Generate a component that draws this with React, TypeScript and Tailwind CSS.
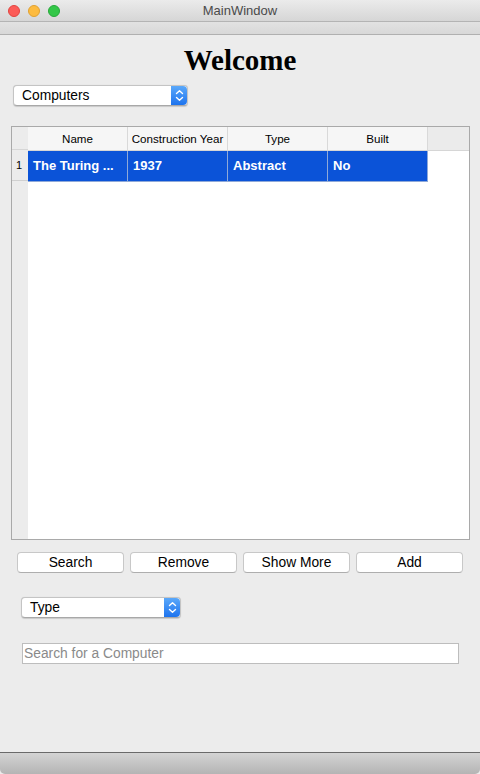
import React from "react";

const sans = { fontFamily: '"Liberation Sans", Arial, sans-serif' };

function Stepper() {
  return (
    <div className="w-[16px] self-stretch rounded-r-[4px] bg-gradient-to-b from-[#5aa8fa] to-[#1c73ee] flex items-center justify-center">
      <svg width="9" height="13" viewBox="0 0 9 13" fill="none" stroke="white" strokeWidth="1.4" strokeLinecap="round" strokeLinejoin="round">
        <path d="M1.5 4.5 L4.5 1.8 L7.5 4.5" />
        <path d="M1.5 8.5 L4.5 11.2 L7.5 8.5" />
      </svg>
    </div>
  );
}

function Combo({ label, className }: { label: string; className: string }) {
  return (
    <div className={`flex items-stretch h-[21px] bg-white rounded-[4px] border border-[#c4c4c4] border-b-[#a8a8a8] shadow-[0_0.5px_1px_rgba(0,0,0,0.15)] ${className}`}>
      <div className="flex-1 pl-[8px] text-[13.8px] leading-[19px] text-black">{label}</div>
      <Stepper />
    </div>
  );
}

function Btn({ label }: { label: string }) {
  return (
    <div className="flex-1 h-[21px] bg-white rounded-[4px] border border-[#c8c8c8] border-b-[#aeaeae] text-[13.8px] leading-[19px] text-center text-black">
      {label}
    </div>
  );
}

export default function App() {
  const cols = ["Name", "Construction Year", "Type", "Built"];
  const row = ["The Turing ...", "1937", "Abstract", "No"];
  return (
    <div className="w-[480px] h-[774px] flex flex-col bg-[#ececec] overflow-hidden" style={sans}>
      {/* title bar */}
      <div className="h-[22px] relative flex items-center justify-center bg-gradient-to-b from-[#ebebeb] to-[#d6d6d6] border-b border-[#b4b4b4]">
        <div className="absolute left-[8px] top-[5px] flex gap-[8px]">
          <div className="w-[12px] h-[12px] rounded-full bg-[#fc5b57] border border-[#e2443f]" />
          <div className="w-[12px] h-[12px] rounded-full bg-[#fdbb3f] border border-[#e0a131]" />
          <div className="w-[12px] h-[12px] rounded-full bg-[#33c748] border border-[#27a83a]" />
        </div>
        <span className="text-[13px] text-[#4a4a4a]">MainWindow</span>
      </div>
      {/* toolbar strip */}
      <div className="h-[13px] bg-gradient-to-b from-[#e2e2e2] to-[#d8d8d8] border-b border-[#b0b0b0]" />
      {/* content */}
      <div className="flex-1 flex flex-col">
        <div className="h-[51px] pt-[11px] text-center text-[29px] leading-[29px] font-bold text-black" style={{ fontFamily: '"Liberation Serif", Georgia, serif' }}>
          Welcome
        </div>
        <div className="pl-[13px] -mt-[1px]">
          <Combo label="Computers" className="w-[175px]" />
        </div>
        <div className="mt-[20px] ml-[11px] w-[459px] h-[414px] border border-[#a9a9a9] bg-white flex">
          <div className="w-[16px] bg-[#ececec] flex flex-col">
            <div className="h-[23px] border-b border-[#d6d6d6]" />
            <div className="h-[31px] border-b border-[#d0d0d0] text-[11px] leading-[30px] pl-[4px] text-black">1</div>
          </div>
          <div className="flex-1 flex flex-col">
            <div className="h-[24px] flex bg-[#ebebeb] border-b border-[#d6d6d6]">
              {cols.map((c) => (
                <div key={c} className="w-[100px] bg-[#f6f6f6] border-r border-[#d9d9d9] text-[11.6px] leading-[23px] text-center text-black whitespace-nowrap overflow-hidden">
                  {c}
                </div>
              ))}
            </div>
            <div className="h-[31px] flex">
              {row.map((c) => (
                <div key={c} className="w-[100px] bg-[#0b53d8] border-r border-b border-[#8fa9d8] text-[13px] leading-[29px] pl-[5px] font-bold text-white whitespace-nowrap">
                  {c}
                </div>
              ))}
            </div>
          </div>
        </div>
        <div className="mt-[12px] px-[17px] flex gap-[6px]">
          <Btn label="Search" />
          <Btn label="Remove" />
          <Btn label="Show More" />
          <Btn label="Add" />
        </div>
        <div className="mt-[24px] pl-[21px]">
          <Combo label="Type" className="w-[160px]" />
        </div>
        <div className="mt-[25px] ml-[22px] w-[437px] h-[21px] bg-white border border-[#bdbdbd] text-[13.8px] leading-[19px] pl-[1px] text-[#8a8a8a]">
          Search for a Computer
        </div>
      </div>
      {/* bottom bar */}
      <div className="h-[22px] border-t border-[#6a6a6a] bg-gradient-to-b from-[#d4d4d4] to-[#b4b4b4] rounded-b-[5px]" />
    </div>
  );
}
